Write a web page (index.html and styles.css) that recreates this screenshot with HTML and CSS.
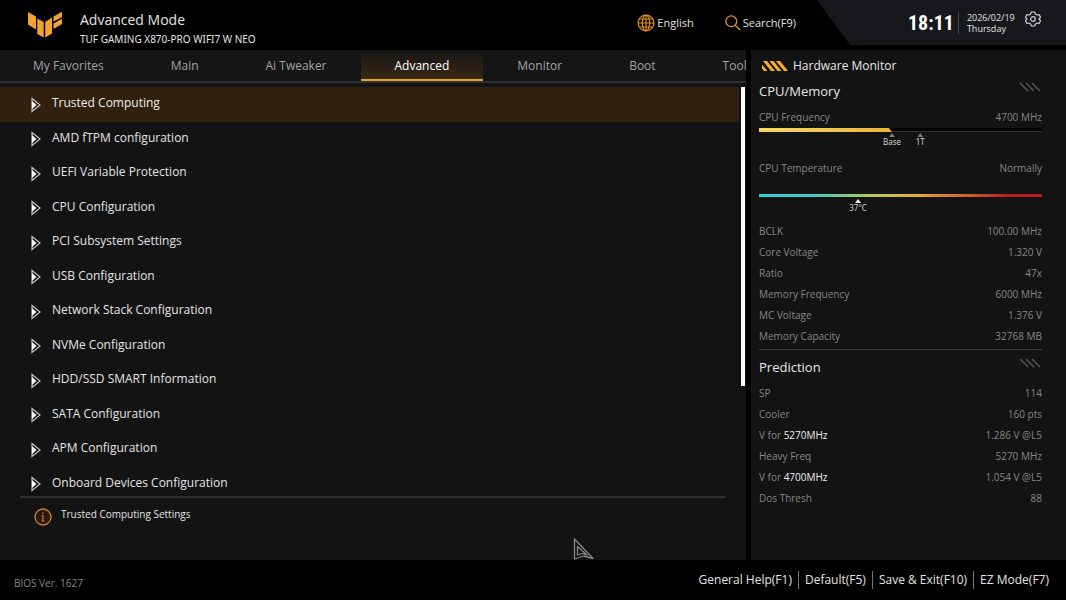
FILE: index.html
```html
<!DOCTYPE html>
<html lang="en">
<head>
<meta charset="utf-8">
<title>Advanced Mode</title>
<link rel="stylesheet" href="styles.css">
</head>
<body>
<svg width="0" height="0" class="defs" aria-hidden="true">
  <symbol id="arrow" viewBox="0 0 10 16"><path d="M1 1.500 9 8 1 14.500Z" fill="none" stroke="#c4c4c4" stroke-width="1.200"/><path d="M1 4 5.500 8 1 12Z" fill="#fff"/></symbol>
  <symbol id="slashes" viewBox="0 0 22 10"><path d="M1 1l8 8M7 1l8 8M13 1l8 8" fill="none" stroke="#55565a" stroke-width="1.500"/></symbol>
</svg>
<div class="page">
  <header class="header">
    <svg class="logo" viewBox="0 0 34 28" aria-label="TUF"><g fill="#f5a32c"><path d="M0 1 8 5.500V18.500L0 13.500Z"/><path d="M9.300 7.500 15.700 11V26.500L9.300 23Z"/><path d="M17.200 11 24 6.500V22.500L17.200 26.500Z"/><path d="M25.500 5.500 34 .8V6L25.500 10.800Z"/><path d="M25.500 12.500 34 7.800V13L25.500 18Z"/></g></svg>
    <div class="titles">
      <h1>Advanced Mode</h1>
      <p>TUF GAMING X870-PRO WIFI7 W NEO</p>
    </div>
    <div class="tools">
      <button type="button" class="tool">
        <svg width="18" height="18" viewBox="0 0 18 18" fill="none" stroke="#e08d2b" stroke-width="1.200"><circle cx="9" cy="9" r="7.900"/><ellipse cx="9" cy="9" rx="3.700" ry="7.900"/><path d="M9 1v16M1 9h16M2.300 5h13.400M2.300 13h13.400"/></svg>
        <span>English</span>
      </button>
      <button type="button" class="tool">
        <svg width="16" height="16" viewBox="0 0 16 16" fill="none" stroke="#e08d2b" stroke-width="1.300"><circle cx="6.300" cy="6.300" r="5.400"/><path d="M10.200 10.200 15.300 15.300"/></svg>
        <span>Search(F9)</span>
      </button>
    </div>
    <div class="clock">
      <time class="time">18:11</time>
      <div class="date"><span>2026/02/19</span><span>Thursday</span></div>
      <button type="button" class="gear" aria-label="Settings">
        <svg width="16" height="16" viewBox="0 0 16 16" fill="none" stroke="#d0d0d2" stroke-width="1.200" stroke-linejoin="round"><path d="M6.400 1h3.200l.8 2 1.700 1 2.200-.3 1.200 2.600L14 8l1.500 1.700-1.200 2.600-2.200-.3-1.700 1-.8 2H6.400l-.8-2-1.700-1-2.200.3L.5 9.700 2 8 .5 6.300l1.200-2.600 2.200.3 1.700-1Z"/><circle cx="8" cy="8" r="2.300"/></svg>
      </button>
    </div>
  </header>

  <main class="main">
    <nav class="tabs">
      <a href="#">My Favorites</a><a href="#">Main</a><a href="#">Ai Tweaker</a><a href="#" class="active" aria-current="page">Advanced</a><a href="#">Monitor</a><a href="#">Boot</a><a href="#">Tool</a>
    </nav>
    <div class="scroller">
      <ul class="list">
        <li><a href="#" class="selected"><svg><use href="#arrow"/></svg>Trusted Computing</a></li>
        <li><a href="#"><svg><use href="#arrow"/></svg>AMD fTPM configuration</a></li>
        <li><a href="#"><svg><use href="#arrow"/></svg>UEFI Variable Protection</a></li>
        <li><a href="#"><svg><use href="#arrow"/></svg>CPU Configuration</a></li>
        <li><a href="#"><svg><use href="#arrow"/></svg>PCI Subsystem Settings</a></li>
        <li><a href="#"><svg><use href="#arrow"/></svg>USB Configuration</a></li>
        <li><a href="#"><svg><use href="#arrow"/></svg>Network Stack Configuration</a></li>
        <li><a href="#"><svg><use href="#arrow"/></svg>NVMe Configuration</a></li>
        <li><a href="#"><svg><use href="#arrow"/></svg>HDD/SSD SMART Information</a></li>
        <li><a href="#"><svg><use href="#arrow"/></svg>SATA Configuration</a></li>
        <li><a href="#"><svg><use href="#arrow"/></svg>APM Configuration</a></li>
        <li><a href="#"><svg><use href="#arrow"/></svg>Onboard Devices Configuration</a></li>
      </ul>
      <div class="track"><div class="thumb"></div></div>
    </div>
    <div class="help">
      <svg width="18" height="18" viewBox="0 0 18 18" fill="none" stroke="#c98732"><circle cx="9" cy="9" r="8" fill="#2a1808" stroke-width="1.300"/><path d="M9 4.500v1.500M9 7.500v5.500M7.800 7.500H9M7.500 13h3" stroke-width="1.200"/></svg>
      <p>Trusted Computing Settings</p>
    </div>
    <svg class="cursor" width="22" height="22" viewBox="0 0 22 22" fill="#111" stroke="#85868a" stroke-width="1.300" stroke-linejoin="round"><path d="M1.500 1 20 20.500 11 18 1.500 21Z"/><path d="M4.500 8.500 14 17 9.500 15.500 4.500 17Z"/></svg>
  </main>

  <aside class="side">
    <h2 class="side-title"><svg width="27" height="10" viewBox="0 0 27 10" aria-hidden="true"><path d="M1 0h4l8 10H9ZM7.500 0h4l8 10h-4ZM14 0h4l8 10h-4ZM0 3.500 5.500 10H2L0 7.500Z" fill="#f4ae30"/></svg>Hardware Monitor</h2>
    <section class="panel">
      <h3>CPU/Memory<svg><use href="#slashes"/></svg></h3>
      <dl><div><dt>CPU Frequency</dt><dd>4700 MHz</dd></div></dl>
      <div class="gauge">
        <div class="bar"><div class="fill"></div></div>
        <span class="mark base">Base</span><span class="mark turbo">1T</span>
      </div>
      <dl><div><dt>CPU Temperature</dt><dd>Normally</dd></div></dl>
      <div class="gauge heat">
        <div class="bar"></div>
        <span class="mark temp">37°C</span>
      </div>
      <dl>
        <div><dt>BCLK</dt><dd>100.00 MHz</dd></div>
        <div><dt>Core Voltage</dt><dd>1.320 V</dd></div>
        <div><dt>Ratio</dt><dd>47x</dd></div>
        <div><dt>Memory Frequency</dt><dd>6000 MHz</dd></div>
        <div><dt>MC Voltage</dt><dd>1.376 V</dd></div>
        <div><dt>Memory Capacity</dt><dd>32768 MB</dd></div>
      </dl>
    </section>
    <section class="panel prediction">
      <h3>Prediction<svg><use href="#slashes"/></svg></h3>
      <dl>
        <div><dt>SP</dt><dd>114</dd></div>
        <div><dt>Cooler</dt><dd>160 pts</dd></div>
        <div><dt>V for <b>5270MHz</b></dt><dd>1.286 V @L5</dd></div>
        <div><dt>Heavy Freq</dt><dd>5270 MHz</dd></div>
        <div><dt>V for <b>4700MHz</b></dt><dd>1.054 V @L5</dd></div>
        <div><dt>Dos Thresh</dt><dd>88</dd></div>
      </dl>
    </section>
  </aside>

  <footer class="footer">
    <span class="version">BIOS Ver. 1627</span>
    <div class="keys">
      <button type="button">General Help(F1)</button>
      <button type="button">Default(F5)</button>
      <button type="button">Save &amp; Exit(F10)</button>
      <button type="button">EZ Mode(F7)</button>
    </div>
  </footer>
</div>
</body>
</html>
```
FILE: styles.css
```css
* { box-sizing: border-box; margin: 0; padding: 0; }
body { background: #000; color: #e4e4e4; font: 12px/16px "Open Sans", "Noto Sans", sans-serif; }
button { background: none; border: 0; color: inherit; font: inherit; cursor: pointer; }
a { color: inherit; text-decoration: none; }
svg { display: block; flex: none; }
.defs { position: absolute; }

.page {
  display: grid;
  grid-template: auto 1fr auto / minmax(0, 1fr) 315px;
  column-gap: 5px;
  min-height: 100vh;
}

.header { grid-column: 1 / -1; display: flex; min-height: 50px; }
.logo { width: 34px; height: 28px; margin: 11px 0 0 28px; }
.titles { margin-left: 18px; padding-top: 10px; }
.titles h1 { font-size: 14px; line-height: 20px; font-weight: 400; }
.titles p { font-family: "Noto Sans", sans-serif; font-size: 10px; line-height: 18px; }
.tools { display: flex; gap: 31px; margin-left: auto; height: 46px; }
.tool { display: flex; align-items: center; gap: 2px; font-size: 11px; }
.clock {
  display: flex; align-items: center;
  width: 249px; height: 45px; margin-left: 21px; padding-left: 91px;
  background: #17181c;
  clip-path: polygon(0 0, 100% 0, 100% 100%, 33px 100%);
}
.time { font: 700 20px/28px "Roboto Condensed", "Open Sans Condensed", "Roboto", sans-serif; color: #fff; }
.date { display: flex; flex-direction: column; margin-left: 4px; padding-left: 8px; border-left: 1px solid #44454a; font-size: 9px; line-height: 11px; }
.gear { margin: 0 25px 8px auto; }

.main { position: relative; display: flex; flex-direction: column; background: #131313; }
.tabs { display: flex; gap: 1px; overflow: hidden; border-bottom: 2px solid #303033; margin-bottom: 4px; white-space: nowrap; font-size: 12px; color: #a2a2a2; background: #151515; }
.tabs a { padding: 8px 33px 7px; line-height: 16px; }
.tabs .active { padding-inline: 34px; color: #fff; background: linear-gradient(#151515, #3c2913); box-shadow: inset 0 -2px #eaa030; }

.scroller { flex: 1; display: flex; gap: 2px; padding-right: 1px; overflow: hidden; }
.list { flex: 1; display: flex; flex-direction: column; list-style: none; margin-bottom: -5px; }
.list li { flex: 1; display: flex; min-height: 34px; }
.list a { flex: 1; display: flex; align-items: center; gap: 11px; padding: 0 31px 2px; }
.list svg { width: 10px; height: 16px; margin-top: 3px; }
.list .selected { background: #32200f; color: #eee; }
.track { width: 4px; }
.thumb { height: 73%; background: #fff; }

.help { display: flex; gap: 9px; min-height: 64px; margin: 0 20px; padding: 8px 14px; border-top: 2px solid #303030; font-size: 10px; }
.help svg { margin-top: 2px; }
.cursor { position: absolute; left: 573px; bottom: 0; }

.side { background: #131313; padding: 8px 24px 24px 8px; color: #868686; font-size: 10px; }
.side-title { display: flex; align-items: center; gap: 4px; padding-left: 3px; font-size: 12px; line-height: 16px; font-weight: 400; color: #e8e8e8; }
.panel h3 { display: flex; justify-content: space-between; padding: 7px 0 6px; font-size: 13px; line-height: 20px; font-weight: 400; color: #e8e8e8; }
.panel h3 svg { width: 22px; height: 10px; margin: 1px 1px 0 0; }
.panel dl div { display: flex; justify-content: space-between; line-height: 21px; }
.panel b { color: #eee; font-weight: 500; }
.gauge { position: relative; height: 30px; }
.bar { height: 4px; background: #000; border-bottom: 1px solid #303030; }
.fill { width: 47%; height: 4px; background: linear-gradient(90deg, #f8d767, #edb43c); clip-path: polygon(0 0, calc(100% - 3px) 0, 100% 100%, 0 100%); }
.heat { height: 42px; padding-top: 15px; }
.heat .bar { height: 3px; border: 0; background: linear-gradient(90deg, #2fd5d8, #49c8c4 20%, #b5c85a 40%, #e3ae3c 55%, #cf5a2b 75%, #b71f20 88%, #b52022); }
.mark { position: absolute; top: 5px; transform: translateX(-50%); color: #d0d0d0; font: 8px/10px "Noto Sans", sans-serif; text-align: center; }
.mark::before { content: ""; display: block; width: 6px; height: 4px; margin: 0 auto; background: #777; clip-path: polygon(50% 0, 100% 100%, 0 100%); }
.base { left: 47%; }
.turbo { left: 57%; }
.temp { left: 35%; top: 20px; }
.temp::before { background: #fff; }
.prediction { border-top: 1px solid #3c3c3c; margin-top: 2px; }

.footer { grid-column: 1 / -1; display: flex; align-items: center; justify-content: space-between; min-height: 40px; padding: 0 11px 0 14px; }
.version { color: #858585; font-size: 10px; padding-top: 6px; }
.keys { display: flex; font-size: 12px; }
.keys button { padding: 0 6px; line-height: 18px; }
.keys button + button { border-left: 1px solid #777; }
```
